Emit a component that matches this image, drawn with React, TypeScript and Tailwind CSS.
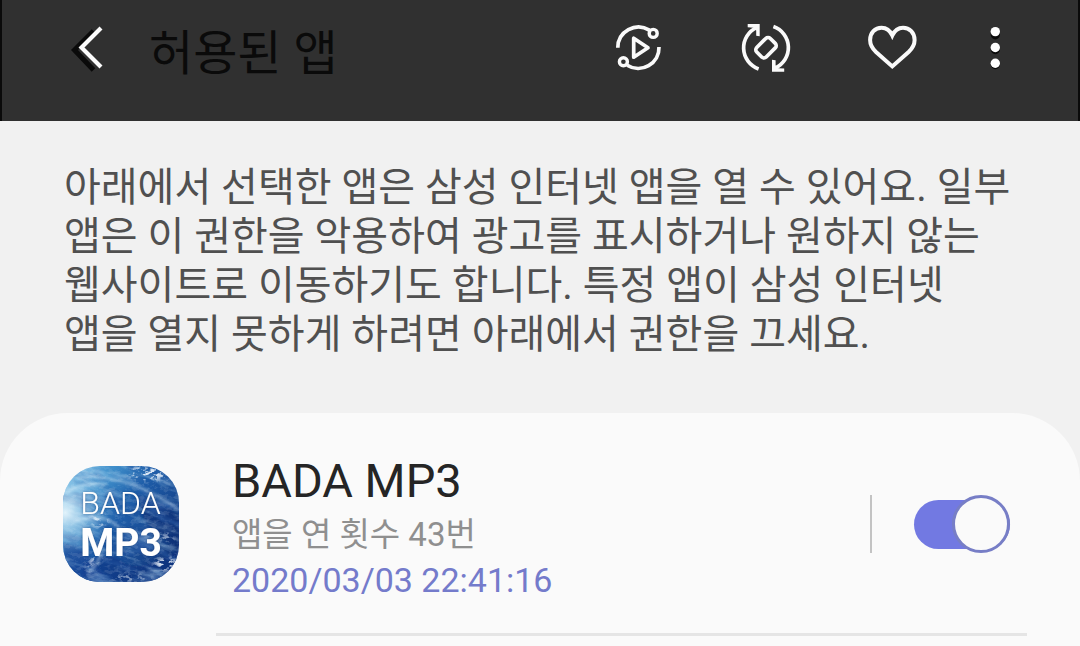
import { useState } from "react";

function BackIcon() {
  return (
    <svg viewBox="0 0 36 52" className="h-[52px] w-9" fill="none" strokeWidth="4.2" aria-hidden="true">
      <path d="M24.5 10 5.5 29 24.5 49" stroke="#0a0a0a" strokeWidth="5" />
      <path d="M32 7 12.5 26.5 32 46" stroke="#fcfcfc" />
    </svg>
  );
}

function VideoAssistantIcon() {
  return (
    <svg viewBox="0 0 52 52" className="size-[52px]" fill="none" stroke="#fafafa" strokeWidth="3.7" aria-hidden="true">
      <path d="M5.8 26.7A20.7 20.7 0 0 1 37.4 9.1" />
      <path d="M47 26A20.7 20.7 0 0 1 15.2 44.2" />
      <circle cx="41.2" cy="12.4" r="4" strokeWidth="3.4" />
      <circle cx="11.4" cy="40.8" r="4" strokeWidth="3.4" />
      <path d="M21.7 17.2V36.2L36 26.7Z" strokeLinejoin="round" />
    </svg>
  );
}

function RotateIcon() {
  return (
    <svg viewBox="0 0 52 52" className="size-[52px]" fill="none" stroke="#fafafa" strokeWidth="3.7" aria-hidden="true">
      <path d="M18.6 47.9A22.3 22.3 0 0 1 17 6.4" />
      <path d="M33.4 5.5A22.3 22.3 0 0 1 35 47" />
      <path d="M7.7 3H19.7V15.2L16.2 14.8V9.5L13.6 6.8 7.7 6.2Z" fill="#fafafa" stroke="none" />
      <path d="M44.2 50.8H32V38.8L35.6 39.2V44.5L38.4 47.2 44.2 47.6Z" fill="#fafafa" stroke="none" />
      <rect x="16.4" y="20" width="19.2" height="13.4" rx="3.2" transform="rotate(-45 26 26.7)" />
    </svg>
  );
}

function HeartIcon() {
  return (
    <svg viewBox="0 0 52 52" className="size-[52px]" fill="none" stroke="#fafafa" strokeWidth="4" aria-hidden="true">
      <path d="M26.3 14.4C24 9.4 20 6.7 15.6 6.7 9 6.7 4.1 12 4.1 19 4.1 24 6.6 27.8 10 31L26.3 45.4 42.6 31C46 27.8 48.6 24 48.6 19 48.6 12 43.6 6.7 37 6.7 32.6 6.7 28.6 9.4 26.3 14.4Z" />
    </svg>
  );
}

function MoreIcon() {
  return (
    <svg viewBox="0 0 20 52" className="h-[52px] w-5" aria-hidden="true">
      <g fill="#0a0a0a">
        <circle cx="10.3" cy="13.8" r="4.6" />
        <circle cx="10.3" cy="28.6" r="4.6" />
        <circle cx="10.3" cy="43.6" r="4.6" />
      </g>
      <g fill="#fff">
        <circle cx="10.3" cy="10.6" r="4.7" />
        <circle cx="10.3" cy="26.5" r="4.7" />
        <circle cx="10.3" cy="42.3" r="4.7" />
      </g>
    </svg>
  );
}

function BadaIcon() {
  return (
    <svg viewBox="0 0 116 116" className="size-[116px] shrink-0" role="img" aria-label="BADA MP3">
      <defs>
        <clipPath id="tile">
          <rect width="116" height="116" rx="37" />
        </clipPath>
        <linearGradient id="sea" x1="0" y1="0.1" x2="1" y2="0.8">
          <stop offset="0" stopColor="#7fbfe6" />
          <stop offset="0.25" stopColor="#3f8fcb" />
          <stop offset="0.5" stopColor="#1d5ca8" />
          <stop offset="1" stopColor="#123579" />
        </linearGradient>
        <radialGradient id="glow" cx="0.02" cy="0.4" r="0.38">
          <stop offset="0" stopColor="#e8f7fd" stopOpacity="0.95" />
          <stop offset="1" stopColor="#8fcdec" stopOpacity="0" />
        </radialGradient>
        <filter id="streaks" x="-20%" y="-20%" width="140%" height="140%">
          <feTurbulence type="fractalNoise" baseFrequency="0.025 0.11" numOctaves="4" seed="7" />
          <feColorMatrix values="0 0 0 0 0.5  0 0 0 0 0.75  0 0 0 0 0.92  3.2 0 0 0 -1.6" />
        </filter>
        <filter id="troughs" x="-20%" y="-20%" width="140%" height="140%">
          <feTurbulence type="fractalNoise" baseFrequency="0.03 0.09" numOctaves="3" seed="21" />
          <feColorMatrix values="0 0 0 0 0.03  0 0 0 0 0.12  0 0 0 0 0.4  3.4 0 0 0 -1.6" />
        </filter>
        <filter id="foam" x="-20%" y="-20%" width="140%" height="140%">
          <feGaussianBlur in="SourceGraphic" stdDeviation="2.5" result="area" />
          <feTurbulence type="fractalNoise" baseFrequency="0.16 0.24" numOctaves="4" seed="11" result="n" />
          <feColorMatrix in="n" values="0 0 0 0 0.9  0 0 0 0 0.95  0 0 0 0 1  6 0 0 0 -2.9" result="f" />
          <feComposite in="f" in2="area" operator="in" />
        </filter>
        <filter id="soft">
          <feGaussianBlur stdDeviation="1.4" />
        </filter>
        <filter id="shade">
          <feDropShadow dx="0" dy="0" stdDeviation="1.8" floodColor="#0b2d6b" floodOpacity="0.6" />
        </filter>
      </defs>
      <g clipPath="url(#tile)">
        <rect width="116" height="116" fill="url(#sea)" />
        <path d="M20 98Q45 84 60 96T116 84V116H20Z" fill="#0d3181" opacity="0.6" filter="url(#soft)" />
        <path d="M0 76Q16 80 28 92L46 116H0Z" fill="#123f92" opacity="0.75" filter="url(#soft)" />
        <path d="M76 30Q96 32 116 50V84Q92 66 80 52Z" fill="#0d2f74" opacity="0.6" filter="url(#soft)" />
        <g transform="rotate(18 58 58)">
          <rect x="-20" y="-20" width="156" height="156" filter="url(#troughs)" opacity="0.7" />
          <rect x="-20" y="-20" width="156" height="156" filter="url(#streaks)" opacity="0.45" />
        </g>
        <rect width="116" height="116" fill="url(#glow)" />
        <g filter="url(#foam)" opacity="0.9">
          <rect width="116" height="116" fillOpacity="0.12" />
          <ellipse cx="86" cy="7" rx="20" ry="7" />
          <ellipse cx="36" cy="55" rx="8" ry="5" />
          <path d="M38 84Q36 98 24 106L28 94Z" />
          <ellipse cx="103" cy="98" rx="12" ry="6" />
          <ellipse cx="104" cy="72" rx="8" ry="4" fillOpacity="0.6" />
          <ellipse cx="68" cy="112" rx="20" ry="3" fillOpacity="0.7" />
        </g>
        <g fill="none" stroke="#dff1fb" strokeLinecap="round" opacity="0.5" filter="url(#soft)">
          <path d="M14 12Q50 8 82 24T114 44" strokeWidth="2.5" />
          <path d="M4 26Q20 16 42 18" strokeWidth="3" />
          <path d="M10 56Q38 46 54 60T84 72" strokeWidth="2" />
          <path d="M39 84Q36 98 25 107" strokeWidth="2.5" />
        </g>
        <g fill="#fff" textAnchor="middle" filter="url(#shade)" className="font-['Roboto',sans-serif]">
          <text x="57.5" y="48" fontSize="32" fontWeight="300">BADA</text>
          <text x="58" y="90" fontSize="39" fontWeight="700">MP3</text>
        </g>
      </g>
    </svg>
  );
}

export default function App() {
  const [allowed, setAllowed] = useState(true);

  return (
    <div className="flex min-h-screen flex-col bg-[#f1f1f1] font-['Roboto','Noto_Sans_CJK_KR',sans-serif]">
      <header className="flex h-[121px] items-start border-x-2 border-[#0a0a0a] bg-[#303030] pt-[21px] pr-[73px] pl-[67px]">
        <button type="button" aria-label="뒤로">
          <BackIcon />
        </button>
        <h1 className="ml-11 flex-1 text-5xl leading-[66px] text-[#0a0a0a]">허용된 앱</h1>
        <div className="flex items-center">
          <button type="button" aria-label="동영상 도우미" className="mr-[76px]">
            <VideoAssistantIcon />
          </button>
          <button type="button" aria-label="화면 회전" className="mr-[74px]">
            <RotateIcon />
          </button>
          <button type="button" aria-label="즐겨찾기" className="mr-[67px]">
            <HeartIcon />
          </button>
          <button type="button" aria-label="더보기">
            <MoreIcon />
          </button>
        </div>
      </header>

      <main className="flex flex-1 flex-col">
        <p className="px-16 pt-[42px] pb-[54px] text-[40px] leading-[49px] break-keep text-[#505050]">
          아래에서 선택한 앱은 삼성 인터넷 앱을 열 수 있어요. 일부 앱은 이 권한을 악용하여 광고를 표시하거나
          원하지 않는 웹사이트로 이동하기도 합니다. 특정 앱이 삼성 인터넷 앱을 열지 못하게 하려면 아래에서
          권한을 끄세요.
        </p>

        <ul className="flex-1 rounded-t-[68px] bg-[#fafafa] pt-8">
          <li className="flex items-center pr-[70px] pl-[63px]">
            <BadaIcon />
            <label htmlFor="allow-bada" className="ml-[53px] flex-1 pt-2 pb-1">
              <span className="block text-[47px] leading-[56px] text-[#252525]">BADA MP3</span>
              <span className="block text-[33px] leading-[52px] text-[#8f8f8f]">앱을 연 횟수 43번</span>
              <span className="block text-[34px] leading-[38px] text-[#747bcb]">2020/03/03 22:41:16</span>
            </label>
            <span className="mr-[42px] h-[58px] w-0.5 bg-[#c3c3c3]" />
            <input
              id="allow-bada"
              type="checkbox"
              role="switch"
              checked={allowed}
              onChange={(e) => setAllowed(e.target.checked)}
              className="flex h-[49px] w-24 shrink-0 cursor-pointer appearance-none items-center rounded-full bg-[#c4c4c4] before:size-[58px] before:shrink-0 before:rounded-full before:border-[3px] before:border-[#a0a0a0] before:bg-[#fafafa] checked:justify-end checked:bg-[#7279e2] checked:before:border-[#777ec6]"
            />
          </li>
          <li role="separator" className="mt-[30px] mr-[53px] ml-[216px] h-[3px] bg-[#e5e5e5]" />
        </ul>
      </main>
    </div>
  );
}
